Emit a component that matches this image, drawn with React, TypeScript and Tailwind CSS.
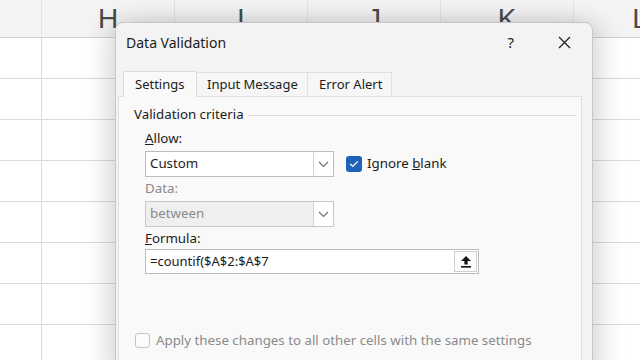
import React from "react";

const cols = [
  { w: 42, l: "" },
  { w: 133, l: "H" },
  { w: 133, l: "I" },
  { w: 133, l: "J" },
  { w: 133, l: "K" },
  { w: 133, l: "L" },
];

function Chevron({ color = "#6b6b6b" }: { color?: string }) {
  return (
    <svg width="11" height="7" viewBox="0 0 11 7">
      <path d="M1 1 L5.5 5.5 L10 1" fill="none" stroke={color} strokeWidth="1.1" />
    </svg>
  );
}

function UploadIcon() {
  return (
    <svg width="12" height="13" viewBox="0 0 12 13">
      <path d="M6 1 L11 6 L7.6 6 L7.6 9.5 L4.4 9.5 L4.4 6 L1 6 Z" fill="#111" />
      <rect x="1" y="11" width="10" height="1.6" fill="#111" />
    </svg>
  );
}

export default function App() {
  return (
    <div
      className="relative w-[640px] h-[360px] overflow-hidden bg-white"
      style={{ fontFamily: '"Noto Sans", "Open Sans", sans-serif' }}
    >
      {/* spreadsheet background */}
      <div className="flex flex-col">
        <div className="flex h-[38px] bg-[#f4f4f4] border-b border-[#d0d0d0]">
          {cols.map((c, i) => (
            <div
              key={i}
              className="shrink-0 flex items-center justify-center border-r border-[#e4e4e4] text-[28px] text-[#4a4a4a] leading-none"
              style={{ width: c.w }}
            >
              <span className="mt-[1px]" style={{ fontFamily: '"Liberation Sans", sans-serif', fontWeight: 300 }}>{c.l}</span>
            </div>
          ))}
        </div>
        {Array.from({ length: 8 }).map((_, r) => (
          <div key={r} className="flex h-[41px] border-b border-[#dadada]">
            {cols.map((c, i) => (
              <div key={i} className="shrink-0 border-r border-[#dadada]" style={{ width: c.w }} />
            ))}
          </div>
        ))}
      </div>

      {/* dialog */}
      <div className="absolute left-[115px] top-[22px] w-[478px] h-[360px] bg-[#f3f3f3] rounded-t-[8px] border border-[#c8c8c8] shadow-[-10px_0_24px_rgba(0,0,0,0.12),10px_0_24px_rgba(0,0,0,0.12)] flex flex-col">
        {/* title bar */}
        <div className="h-[38px] flex items-center pl-[10px] pr-[21px] shrink-0">
          <span className="text-[14px] text-[#1b1b1b]">Data Validation</span>
          <span className="ml-auto text-[15px] text-[#222] mr-[44px]">?</span>
          <svg width="13" height="13" viewBox="0 0 13 13">
            <path d="M1 1 L12 12 M12 1 L1 12" stroke="#222" strokeWidth="1.3" />
          </svg>
        </div>
        {/* tabs */}
        <div className="flex items-end pl-[7px] h-[35px] shrink-0">
          <div className="h-[26px] pl-[11px] flex items-center whitespace-nowrap bg-[#f9f9f9] border border-b-0 border-[#dcdcdc] text-[13px] text-[#1b1b1b] relative z-10 mb-[-1px] w-[74px]">
            Settings
          </div>
          <div className="h-[24px] pl-[10px] flex items-center whitespace-nowrap bg-[#f6f6f6] border border-b-0 border-l-0 border-[#e0e0e0] text-[13px] text-[#1b1b1b] w-[111px]">
            Input Message
          </div>
          <div className="h-[24px] pl-[11px] flex items-center whitespace-nowrap bg-[#f6f6f6] border border-b-0 border-l-0 border-[#e0e0e0] text-[13px] text-[#1b1b1b] w-[84px]">
            Error Alert
          </div>
        </div>
        {/* panel */}
        <div className="ml-[2px] w-[464px] flex-1 bg-[#f9f9f9] border border-[#e0e0e0] flex flex-col text-[13.3px] text-[#1b1b1b]">
          <div className="flex items-center pl-[15px] pr-[5px] mt-[8px] h-[20px]">
            <span>Validation criteria</span>
            <div className="flex-1 h-px bg-[#dcdcdc] ml-[4px]" />
          </div>
          <div className="pl-[26px] flex flex-col">
            <div className="h-[20px] flex items-center mt-[4px]">
              <span><u>A</u>llow:</span>
            </div>
            <div className="flex items-center mt-[2px]">
              <div className="w-[189px] h-[26px] bg-white border border-[#bcbcbc] flex items-center">
                <span className="pl-[4px] flex-1">Custom</span>
                <div className="w-[20px] h-full border-l border-[#d4d4d4] flex items-center justify-center">
                  <Chevron />
                </div>
              </div>
              <div className="ml-[12px] w-[16px] h-[16px] rounded-[3px] bg-[#1f63b8] flex items-center justify-center">
                <svg width="10" height="8" viewBox="0 0 10 8">
                  <path d="M1.2 4 L3.8 6.4 L8.8 1.4" fill="none" stroke="white" strokeWidth="1.3" />
                </svg>
              </div>
              <span className="ml-[5px]">Ignore <u>b</u>lank</span>
            </div>
            <div className="h-[20px] flex items-center mt-[2px] text-[#8a8a8a]">
              <span>Data:</span>
            </div>
            <div className="w-[189px] h-[26px] bg-[#efefef] border border-[#c8c8c8] flex items-center mt-[2px]">
              <span className="pl-[4px] flex-1 text-[#8a8a8a]">between</span>
              <div className="w-[20px] h-full border-l border-[#d4d4d4] bg-white flex items-center justify-center">
                <Chevron />
              </div>
            </div>
            <div className="h-[20px] flex items-center mt-[2px]">
              <span><u>F</u>ormula:</span>
            </div>
            <div className="w-[334px] h-[25px] bg-white border border-[#bcbcbc] flex items-center">
              <span className="pl-[4px] flex-1 text-[13px]">=countif($A$2:$A$7</span>
              <div className="w-[23px] h-[21px] mr-[1px] border border-[#cfcfcf] bg-[#fbfbfb] flex items-center justify-center">
                <UploadIcon />
              </div>
            </div>
          </div>
          <div className="flex items-center pl-[16px] mt-[57px]">
            <div className="w-[15px] h-[15px] rounded-[3px] border border-[#c4c4c4] bg-[#fbfbfb]" />
            <span className="ml-[6px] text-[#8a8a8a]">Apply these changes to all other cells with the same settings</span>
          </div>
        </div>
      </div>
    </div>
  );
}
